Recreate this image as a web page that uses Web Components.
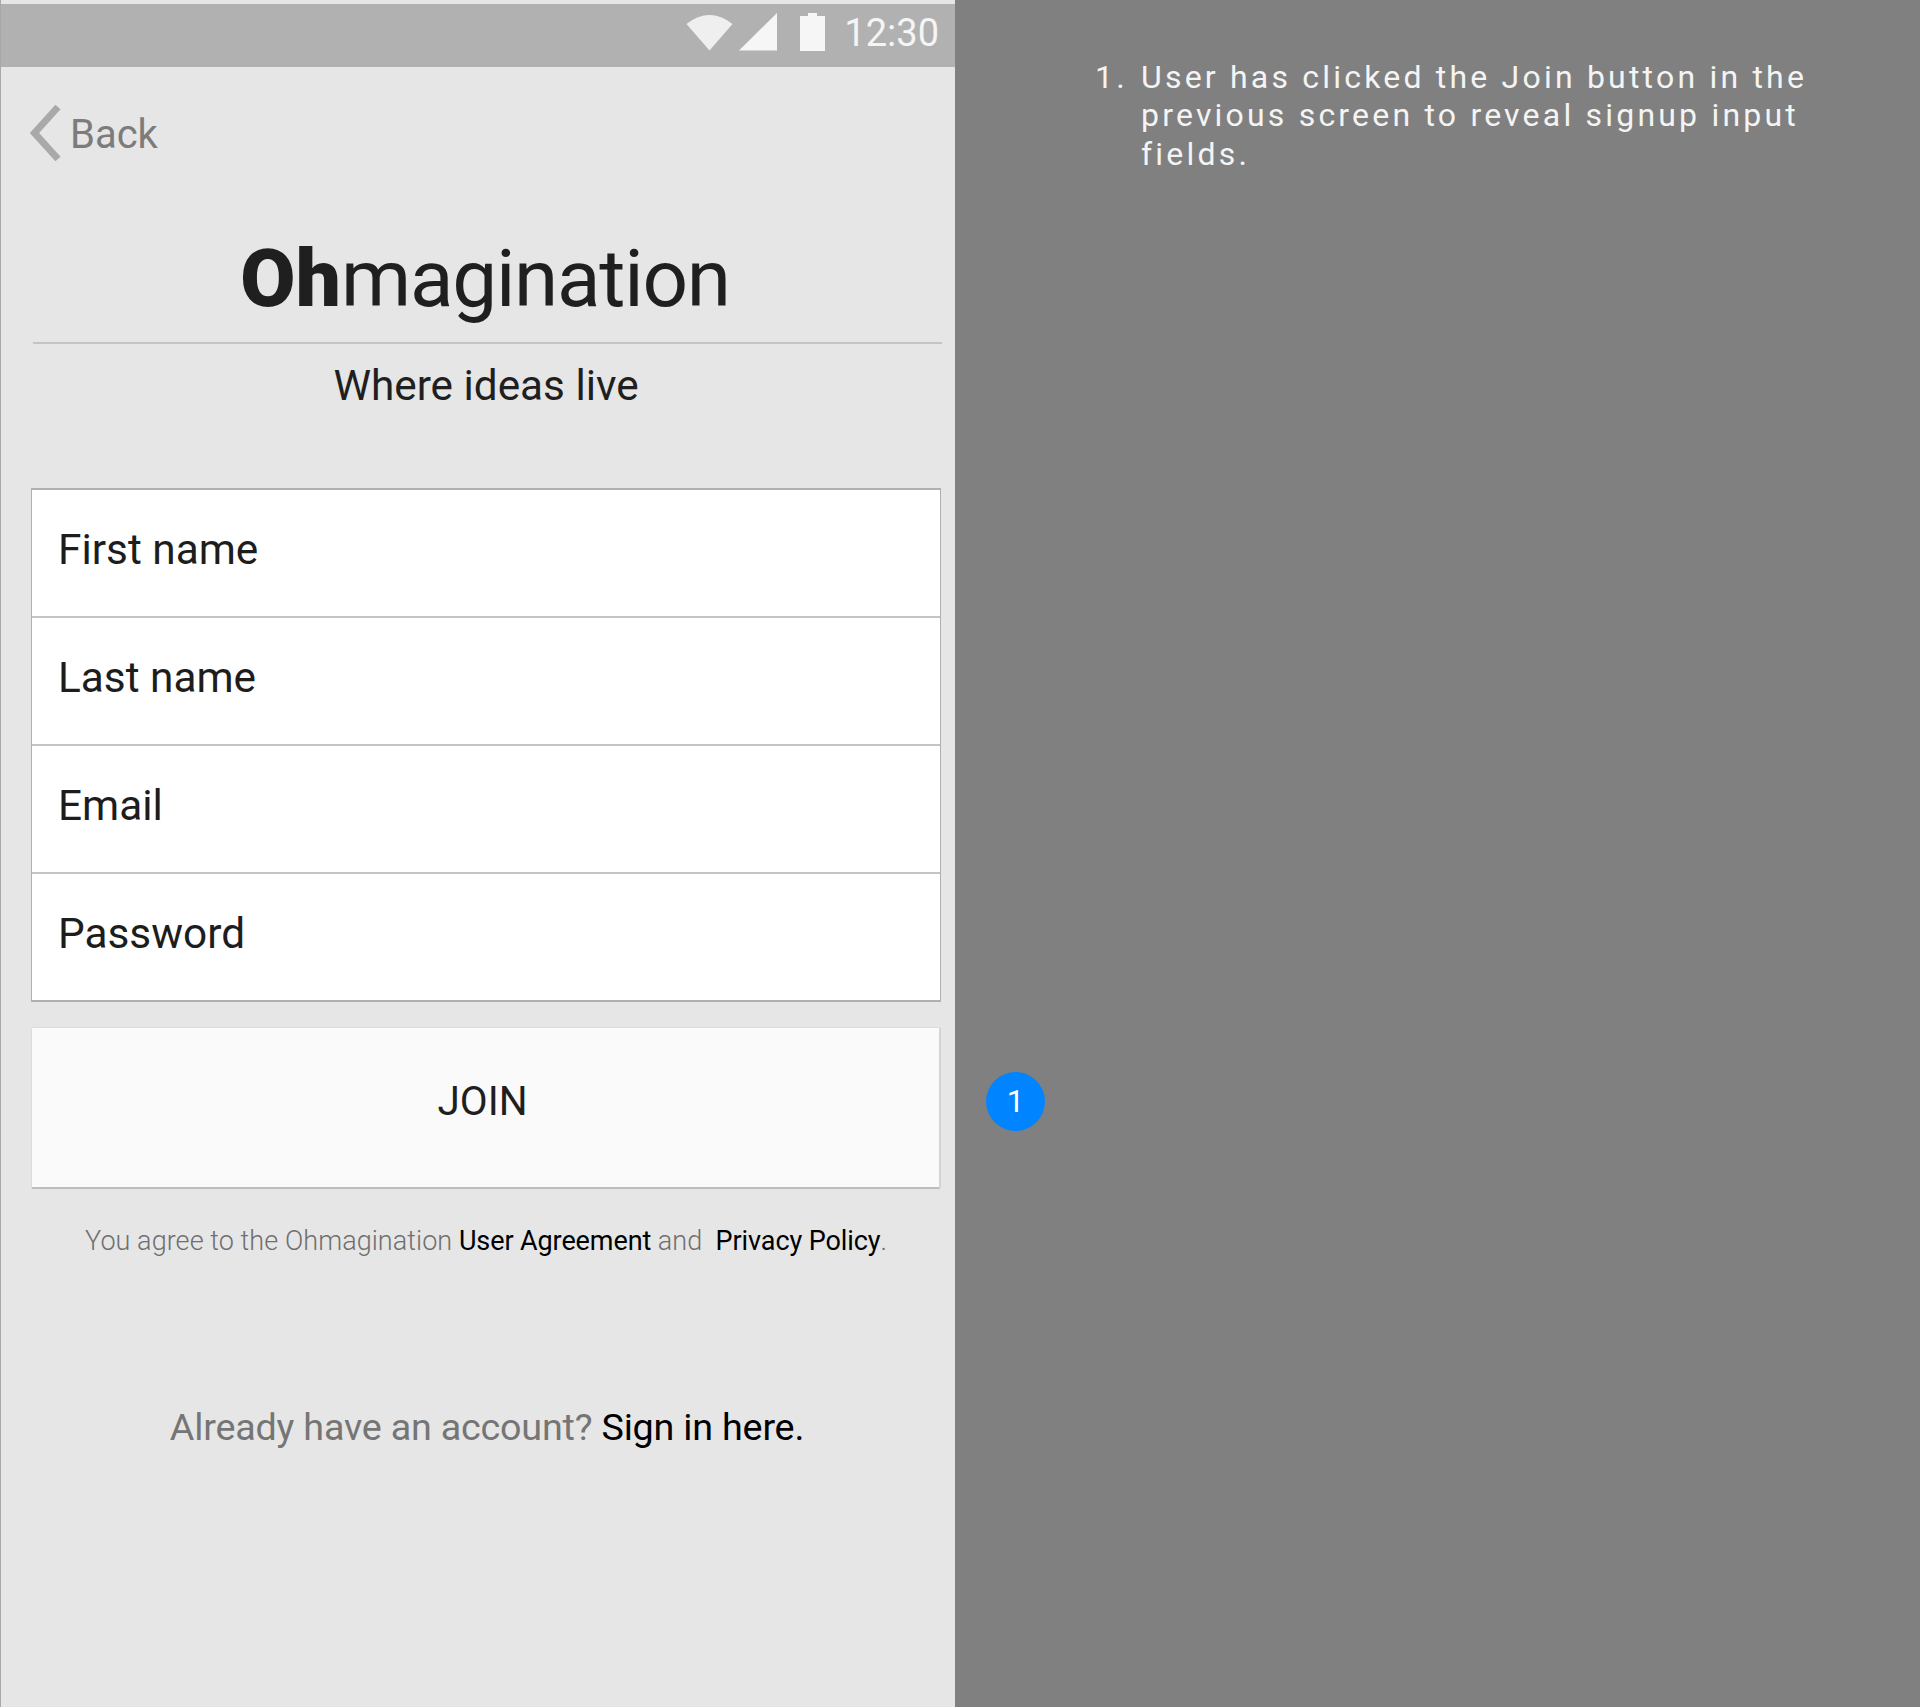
<!DOCTYPE html>
<html lang="en">
<head>
<meta charset="utf-8">
<title>Ohmagination signup</title>
<style>
html, body { margin: 0; padding: 0; background: #808080; }
body { font-family: Roboto, "Liberation Sans", sans-serif; }
</style>
</head>
<body>
<annotated-screen>
  <phone-screen slot="screen">
    <status-bar></status-bar>
    <back-link>Back</back-link>
    <brand-header></brand-header>
    <signup-fields>
      <field-row>First name</field-row>
      <field-row>Last name</field-row>
      <field-row>Email</field-row>
      <field-row>Password</field-row>
    </signup-fields>
    <join-button>JOIN</join-button>
    <legal-line></legal-line>
    <signin-line></signin-line>
  </phone-screen>
  <notes-panel slot="notes">
    <note-item number="1">User has clicked the Join button in the previous screen to reveal signup input fields.</note-item>
  </notes-panel>
</annotated-screen>

<script>
class Base extends HTMLElement {
  connectedCallback() {
    if (this.shadowRoot) return;
    const shadowRoot = this.attachShadow({ mode: "open" });
    shadowRoot.innerHTML = this.constructor.markup.trim();
  }
}

class AnnotatedScreen extends Base {
  static markup = `
<style>
:host { display: grid; grid-template-columns: 955px 965px; width: 1920px; height: 1707px; overflow: hidden; }
</style>
<slot name="screen"></slot>
<slot name="notes"></slot>`;
}

class PhoneScreen extends Base {
  static markup = `
<style>
:host {
    display: flex;
    flex-direction: column;
    box-sizing: border-box;
    height: 1707px;
    padding-top: 4px;
    background: #e6e6e6;
    border-left: 1px solid #a8a8a8;
}
</style>
<slot></slot>`;
}

class StatusBar extends Base {
  static markup = `
<style>
:host {
    display: flex;
    align-items: flex-start;
    justify-content: flex-end;
    height: 63px;
    padding-right: 16px;
    background: #b1b1b1;
    color: #f5f5f5;
    font-size: 38px;
}
svg { display: block; margin-top: 9px; }
.wifi { margin-right: 6px; }
.signal { margin-right: 23px; }
.battery { margin-right: 19px; }
.time { line-height: 63px; margin-top: -2px; }
</style>
<svg class="wifi" width="47" height="38" viewBox="0 0 47 38"><path d="M0.5 11 Q23.5 -7 46.5 11 L23.5 37.5 Z" fill="#efefef"/></svg>
<svg class="signal" width="38" height="38" viewBox="0 0 38 38"><path d="M0 37.5 L38 0 V37.5 Z" fill="#f6f6f6"/></svg>
<svg class="battery" width="25" height="38" viewBox="0 0 25 38"><path d="M8 0 H17 V3 H25 V38 H0 V3 H8 Z" fill="#f6f6f6"/></svg>
<span class="time">12:30</span>`;
}

class BackLink extends Base {
  static markup = `
<style>
:host {
    display: flex;
    align-items: center;
    height: 132px;
    padding-left: 29px;
    color: #7c7c7c;
    font-size: 40px;
}
svg { display: block; margin-right: 9px; }
span { position: relative; top: 1px; }
</style>
<svg width="31" height="58" viewBox="0 0 31 58"><path d="M28 3 L4.500 29 L28 55" fill="none" stroke="#a9a9a9" stroke-width="7"/></svg>
<span><slot></slot></span>`;
}

class BrandHeader extends Base {
  static markup = `
<style>
:host {
    display: flex;
    flex-direction: column;
    align-items: center;
    padding-left: 32px;
    padding-right: 13px;
    height: 289px;
    box-sizing: border-box;
    color: #1f1f1f;
}
.name {
    font-size: 80px;
    line-height: 94px;
    margin: 33px 5px 0 0;
    letter-spacing: -1.25px;
}
b { font-weight: 900; letter-spacing: 0.2px; }
.rule { align-self: stretch; height: 2px; background: #c4c4c4; margin-top: 16px; }
.tag { font-size: 42.3px; line-height: 50px; margin: 17px 3px 0 0; }
</style>
<div class="name"><b>Oh</b>magination</div>
<div class="rule"></div>
<div class="tag">Where ideas live</div>`;
}

class SignupFields extends Base {
  static markup = `
<style>
:host {
    display: flex;
    flex-direction: column;
    box-sizing: border-box;
    width: 910px;
    margin-left: 30px;
    background: #fff;
    border: 1px solid #b0b0b0;
    border-top-width: 2px;
    border-bottom-width: 2px;
}
</style>
<slot></slot>`;
}

class FieldRow extends Base {
  static markup = `
<style>
:host {
    display: flex;
    align-items: center;
    box-sizing: border-box;
    height: 128px;
    padding: 0 0 8px 26px;
    border-bottom: 2px solid #c4c4c4;
    color: #1d1d1d;
    font-size: 42.35px;
}
:host(:last-child) { border-bottom: 0; height: 126px; }
</style>
<slot></slot>`;
}

class JoinButton extends Base {
  static markup = `
<style>
:host {
    display: flex;
    align-items: center;
    justify-content: center;
    box-sizing: border-box;
    width: 910px;
    height: 162px;
    margin: 25px 0 0 30px;
    padding: 0 6px 14px 0;
    background: #fafafa;
    border: 1px solid #dcdcdc;
    border-bottom: 2px solid #bdbdbd;
    border-right: 2px solid #d4d4d4;
    border-radius: 2px;
    color: #1f1f1f;
    font-size: 40.5px;
}
</style>
<slot></slot>`;
}

class LegalLine extends Base {
  static markup = `
<style>
:host {
    display: block;
    margin-top: 32px;
    padding-left: 30px;
    width: 910px;
    text-align: center;
    color: #6f6f6f;
    font-size: 27px;
    line-height: 40px;
    font-weight: 300;
    white-space: pre;
    letter-spacing: 0.06px;
}
a { color: #000; font-weight: 400; text-decoration: none; letter-spacing: -0.1px; }
</style>You agree to the Ohmagination <a>User Agreement</a> and  <a>Privacy Policy</a>.`;
}

class SigninLine extends Base {
  static markup = `
<style>
:host {
    display: block;
    margin-top: 143px;
    padding-left: 31px;
    width: 910px;
    text-align: center;
    color: #757575;
    font-size: 37.7px;
    line-height: 46px;
    font-weight: 400;
    letter-spacing: -0.2px;
}
a { color: #000; letter-spacing: -0.2px; }
</style>
Already have an account? <a>Sign in here.</a>`;
}

class NotesPanel extends Base {
  static markup = `
<style>
:host {
    display: block;
    position: relative;
    box-sizing: border-box;
    height: 1707px;
    padding: 58px 100px 0 140px;
    background: #808080;
}
.marker {
    position: absolute;
    left: 31px;
    top: 1072px;
    width: 59px;
    height: 59px;
    border-radius: 50%;
    background: #0084ff;
    color: #fff;
    font-size: 31px;
    line-height: 59px;
    text-align: center;
}
</style>
<div class="marker">1</div>
<slot></slot>`;
}

class NoteItem extends Base {
  static markup = `
<style>
:host {
    display: grid;
    grid-template-columns: 46px 1fr;
    color: #f4f4f4;
    font-size: 32px;
    line-height: 38.3px;
    letter-spacing: 3.2px;
    font-weight: 400;
}
</style>
<span id="num"></span>
<div><slot></slot></div>`;
  connectedCallback() {
    super.connectedCallback();
    this.shadowRoot.getElementById("num").textContent = this.getAttribute("number") + ".";
  }
}

customElements.define("annotated-screen", AnnotatedScreen);
customElements.define("phone-screen", PhoneScreen);
customElements.define("status-bar", StatusBar);
customElements.define("back-link", BackLink);
customElements.define("brand-header", BrandHeader);
customElements.define("signup-fields", SignupFields);
customElements.define("field-row", FieldRow);
customElements.define("join-button", JoinButton);
customElements.define("legal-line", LegalLine);
customElements.define("signin-line", SigninLine);
customElements.define("notes-panel", NotesPanel);
customElements.define("note-item", NoteItem);
</script>
</body>
</html>
